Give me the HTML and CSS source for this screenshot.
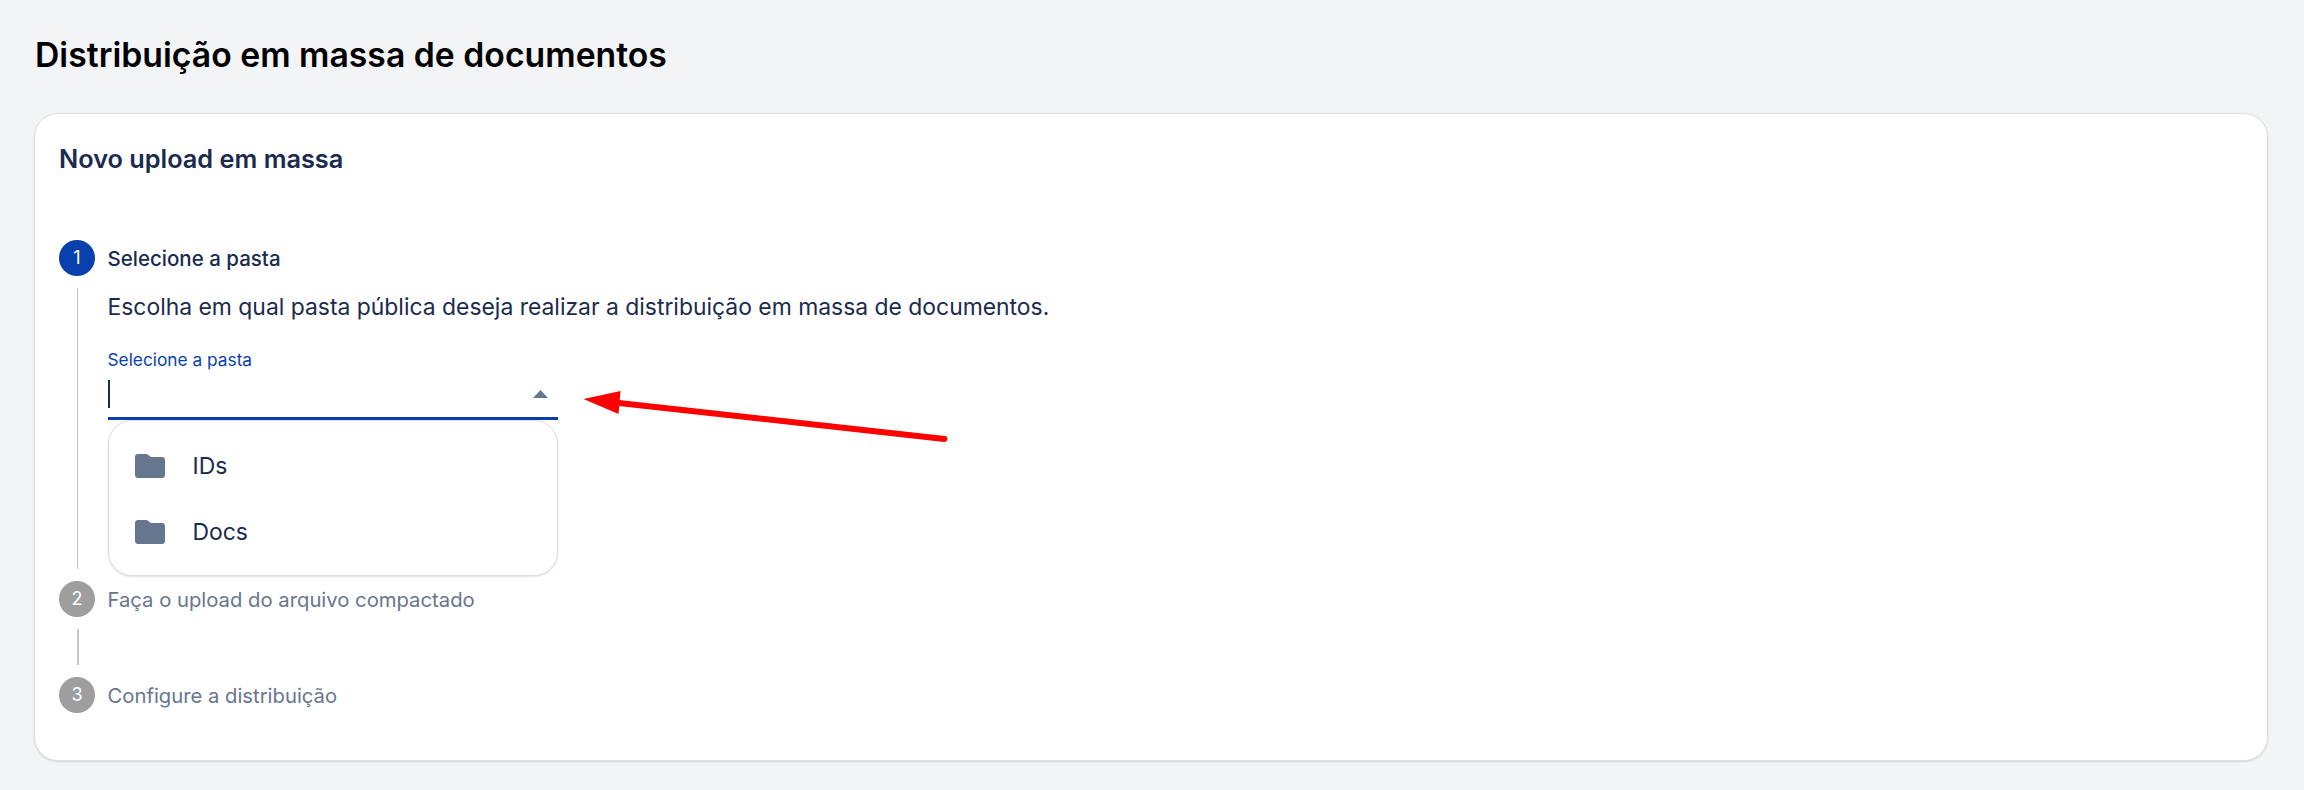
FILE: index.html
```html
<!DOCTYPE html>
<html lang="pt">
<head>
<meta charset="utf-8">
<title>Distribuição em massa de documentos</title>
<link rel="stylesheet" href="styles.css">
</head>
<body>
<main class="page">
  <h1 class="page-title">Distribuição em massa de documentos</h1>
  <section class="card">
    <h2 class="card-title">Novo upload em massa</h2>
    <div class="stepper">
      <div class="step">
        <span class="badge badge-active">1</span>
        <span class="step-label step-label-active">Selecione a pasta</span>
      </div>
      <div class="step-body">
        <p class="step-desc">Escolha em qual pasta pública deseja realizar a distribuição em massa de documentos.</p>
        <div class="field">
          <label class="field-label">Selecione a pasta</label>
          <div class="field-input">
            <span class="caret"></span>
            <svg class="triangle" viewBox="0 0 15 8" width="15" height="8"><path d="M7.5 0 15 8H0z"/></svg>
          </div>
          <ul class="menu">
            <li class="menu-item">
              <svg class="folder" viewBox="0 0 30 24" width="30" height="24"><path d="M3 0h8.2c.8 0 1.500.3 2.100.9L16 3h11c1.700 0 3 1.300 3 3v15c0 1.700-1.300 3-3 3H3c-1.700 0-3-1.300-3-3V3c0-1.700 1.300-3 3-3z"/></svg>
              <span>IDs</span>
            </li>
            <li class="menu-item">
              <svg class="folder" viewBox="0 0 30 24" width="30" height="24"><path d="M3 0h8.2c.8 0 1.500.3 2.100.9L16 3h11c1.700 0 3 1.300 3 3v15c0 1.700-1.300 3-3 3H3c-1.700 0-3-1.300-3-3V3c0-1.700 1.300-3 3-3z"/></svg>
              <span>Docs</span>
            </li>
          </ul>
        </div>
      </div>
      <div class="step">
        <span class="badge">2</span>
        <span class="step-label">Faça o upload do arquivo compactado</span>
      </div>
      <div class="connector"></div>
      <div class="step">
        <span class="badge">3</span>
        <span class="step-label">Configure a distribuição</span>
      </div>
    </div>
    <svg class="arrow" viewBox="0 0 370 56" width="370" height="56">
      <path class="arrow-shaft" d="M361.500 48 36 12"/>
      <path class="arrow-head" d="M.5 8 37.500 0 35.500 23z"/>
    </svg>
  </section>
</main>
</body>
</html>
```
FILE: styles.css
```css
* { box-sizing: border-box; }
html, body { margin: 0; padding: 0; }
body {
  background: #f3f4f6;
  font-family: Inter, "Liberation Sans", sans-serif;
  color: #1a2b4e;
}
.page { padding: 34px 36px 29px 34px; }
.page-title {
  margin: 0 0 38px 1px;
  height: 41px;
  font-size: 33.75px;
  line-height: 41px;
  font-weight: 600;
  color: #000;
}
.card {
  position: relative;
  height: 648px;
  padding: 28.5px 24px 0;
  background: #fff;
  border: 1.5px solid #dddfe4;
  border-radius: 24px;
  box-shadow: 0 1px 2px rgba(0,0,0,.12);
}
.card-title {
  margin: 0 0 65px;
  font-size: 25.3px;
  line-height: 32px;
  font-weight: 600;
}
.stepper { display: flex; flex-direction: column; }
.step { display: flex; align-items: center; gap: 12.5px; height: 36px; }
.badge {
  display: flex;
  align-items: center;
  justify-content: center;
  flex: none;
  width: 36px;
  height: 36px;
  border-radius: 50%;
  background: #9e9e9e;
  color: #fff;
  font-size: 18px;
}
.badge-active { background: #0a3fae; }
.step-label { padding-top: 2px; font-size: 20.25px; color: #67768f; }
.step-label-active { color: #1a2b4e; font-size: 20.5px; font-weight: 500; }
.step-body {
  margin: 12px 0 12px 18px;
  padding: 1.5px 0 0 29.5px;
  height: 281px;
  border-left: 1.5px solid #c4c4c4;
}
.step-desc { margin: 0; font-size: 22.9px; line-height: 36px; }
.field { position: relative; width: 450px; margin-top: 22.5px; }
.field-label { display: block; font-size: 17.3px; line-height: 24px; color: #0a3fae; }
.field-input {
  display: flex;
  align-items: center;
  justify-content: space-between;
  height: 48px;
  padding-right: 10px;
  border-bottom: 3px solid #0a3fae;
}
.caret { width: 2px; height: 28px; background: #1a2b4e; }
.triangle { fill: #67768f; }
.menu {
  position: absolute;
  top: 72px;
  left: 0;
  width: 450px;
  height: 156px;
  margin: 0;
  padding: 12px 0;
  list-style: none;
  background: #fff;
  border: 1.5px solid #dddfe4;
  border-radius: 24px;
  box-shadow: 0 1px 2px rgba(0,0,0,.12);
}
.menu-item {
  display: flex;
  align-items: center;
  gap: 28px;
  height: 66px;
  padding-left: 26px;
  font-size: 22.9px;
}
.folder { fill: #67768f; flex: none; }
.connector {
  width: 1.5px;
  height: 36px;
  margin: 12px 0 12px 18px;
  background: #c4c4c4;
}
.arrow { position: absolute; left: 548px; top: 277px; overflow: visible; }
.arrow-shaft { fill: none; stroke: #ff0000; stroke-width: 6; stroke-linecap: round; }
.arrow-head { fill: #ff0000; }
```
